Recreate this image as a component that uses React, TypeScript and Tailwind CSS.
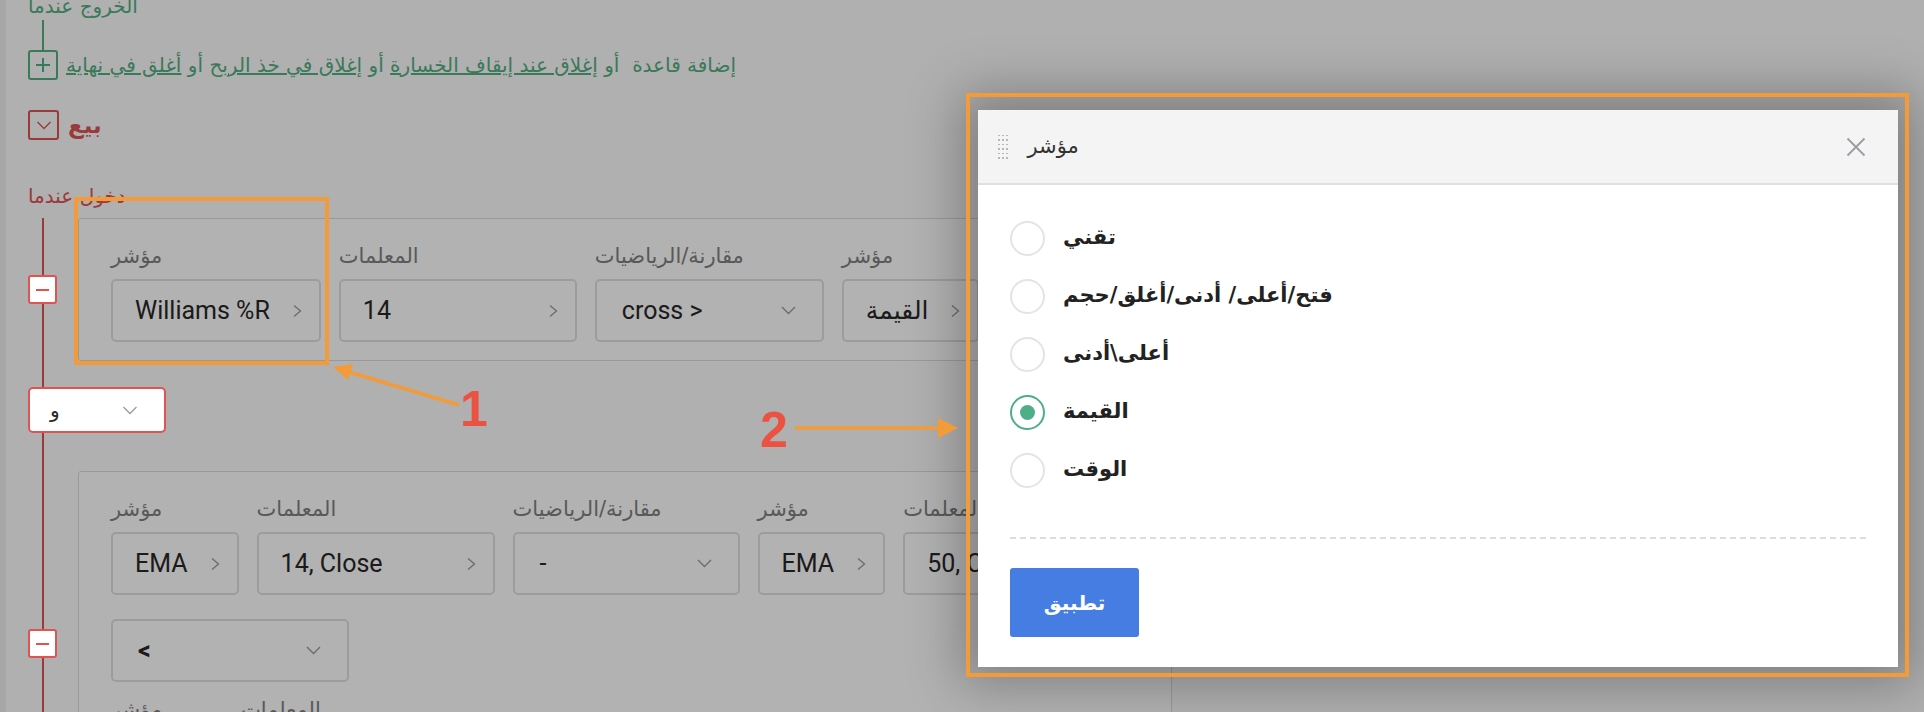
import clsx from "clsx";

const GREEN = "text-[#54ae82]";

function ChevronRight() {
  return (
    <svg width="11" height="14" viewBox="0 0 11 14" className="shrink-0">
      <path d="M2 1.5 L8.5 7 L2 12.5" fill="none" stroke="#9a9a9a" strokeWidth="1.3" />
    </svg>
  );
}

function ChevronDown({ color = "#9a9a9a", w = 15 }: { color?: string; w?: number }) {
  return (
    <svg width={w} height="9" viewBox="0 0 15 9" className="shrink-0">
      <path d="M1 1 L7.5 7.5 L14 1" fill="none" stroke={color} strokeWidth="1.3" />
    </svg>
  );
}

function Label({ text }: { text?: string }) {
  return <div className="h-[24px] whitespace-nowrap text-[21px] leading-[24px] text-[#808080]">{text}</div>;
}

function Field({ label, value, wide }: { label?: string; value: string; wide?: boolean }) {
  return (
    <div className="flex shrink-0 flex-col">
      <Label text={label} />
      <div
        className={clsx(
          "mt-[11px] flex h-[63px] items-center rounded-[5px] border-2 border-[#e0e0e0] bg-white pl-[22px] pr-[16px]",
          wide ? "w-[238px] justify-between" : "gap-[22px]"
        )}
      >
        <span className="whitespace-nowrap font-['Roboto','DejaVu_Sans',sans-serif] text-[25px] text-[#282828]">
          {value}
        </span>
        <ChevronRight />
      </div>
    </div>
  );
}

function Select({ label, value, width, bold }: { label?: string; value: string; width: string; bold?: boolean }) {
  const box = (
    <div
      className={clsx(
        "flex h-[63px] shrink-0 items-center justify-between rounded-[5px] border-2 border-[#e0e0e0] bg-white pl-[25px] pr-[26px]",
        width
      )}
    >
      <span
        className={clsx(
          "whitespace-nowrap font-['Roboto',sans-serif] text-[25px] text-[#282828]",
          bold && "font-bold"
        )}
      >
        {value}
      </span>
      <ChevronDown />
    </div>
  );
  if (label === undefined) return box;
  return (
    <div className="flex shrink-0 flex-col">
      <Label text={label} />
      <div className="mt-[11px]">{box}</div>
    </div>
  );
}

function MinusBox() {
  return (
    <div className="relative z-10 flex h-[29px] w-[29px] items-center justify-center rounded-[3px] border-2 border-[#df5353] bg-white">
      <div className="h-[2px] w-[13px] bg-[#df5353]" />
    </div>
  );
}

const options = ["تقني", "فتح/أعلى/ أدنى/أغلق/حجم", "أعلى\\أدنى", "القيمة", "الوقت"];

export default function App() {
  return (
    <div className="relative h-[712px] w-[1924px] overflow-hidden bg-[#fcfcfc] font-['DejaVu_Sans',sans-serif]">
      <div className="flex h-full">
        <div className="h-full w-[6px] bg-[#efefef]" />
        <div className="flex-1 pl-[22px]">
          {/* exit section */}
          <div className={clsx("-mt-[5px] h-[22px] text-left text-[20px] leading-[22px]", GREEN)}>الخروج عندما</div>
          <div className="ml-[14px] mt-[3px] h-[30px] w-[2px] bg-[#54ae82]" />
          <div className="flex h-[30px] items-center">
            <div className="flex h-[30px] w-[30px] shrink-0 items-center justify-center rounded-[3px] border-2 border-[#54ae82]">
              <svg width="14" height="14" viewBox="0 0 14 14">
                <path d="M7 0 V14 M0 7 H14" stroke="#54ae82" strokeWidth="2" />
              </svg>
            </div>
            <div dir="rtl" className={clsx("ml-[8px] whitespace-nowrap text-[20px] leading-[26px]", GREEN)}>
              <span>إضافة قاعدة</span>&nbsp; <span>أو</span> <span className="underline">إغلاق عند إيقاف الخسارة</span>{" "}
              <span>أو</span> <span className="underline">إغلاق في خذ الربح</span> <span>أو</span>{" "}
              <span className="underline">أغلق في نهاية</span>
            </div>
          </div>

          {/* sell */}
          <div className="mt-[30px] flex h-[30px] items-center">
            <div className="flex h-[30px] w-[31px] items-center justify-center rounded-[3px] border-2 border-[#df5353]">
              <ChevronDown color="#df5353" w={16} />
            </div>
            <div className="ml-[9px] text-[23px] font-bold text-[#df5353]">بيع</div>
          </div>

          <div className="mt-[45px] h-[22px] text-[20px] leading-[22px] text-[#df5353]">دخول عندما</div>

          {/* entry tree */}
          <div className="relative mt-[11px]">
            <div className="absolute bottom-0 left-[14px] top-0 w-[2px] bg-[#df5353]" />

            <div className="flex items-center">
              <div className="w-[50px] shrink-0">
                <MinusBox />
              </div>
              <div className="w-[1094px] shrink-0 rounded-[3px] border border-[#dbdbdb] bg-white px-[32px] pb-[18px] pt-[25px]">
                <div className="flex gap-[18px]">
                  <Field label="مؤشر" value="Williams %R" />
                  <Field label="المعلمات" value="14" wide />
                  <Select label="مقارنة/الرياضيات" value="cross >" width="w-[229px]" />
                  <Field label="مؤشر" value="القيمة" />
                  <Select label="القيمة" value="-20" width="w-[140px]" />
                </div>
              </div>
            </div>

            <div className="relative z-10 mt-[26px] flex h-[46px] w-[138px] items-center justify-between rounded-[5px] border-2 border-[#df5353] bg-white pl-[20px] pr-[26px]">
              <span className="text-[20px] text-[#282828]">و</span>
              <ChevronDown color="#9a9a9a" w={16} />
            </div>

            <div className="mt-[38px] flex items-center">
              <div className="w-[50px] shrink-0">
                <MinusBox />
              </div>
              <div className="w-[1094px] shrink-0 rounded-[3px] border border-[#dbdbdb] bg-white px-[32px] pb-[19px] pt-[25px]">
                <div className="flex gap-[18px]">
                  <Field label="مؤشر" value="EMA" />
                  <Field label="المعلمات" value="14, Close" wide />
                  <Select label="مقارنة/الرياضيات" value="-" width="w-[227px]" />
                  <Field label="مؤشر" value="EMA" />
                  <Field label="المعلمات" value="50, Close" wide />
                </div>
                <div className="mt-[24px] flex">
                  <Select value="<" width="w-[238px]" bold />
                </div>
                <div className="mt-[16px] flex gap-[18px]">
                  <Field label="مؤشر" value="RSI" />
                  <Field label="المعلمات" value="14, Close" wide />
                </div>
              </div>
            </div>
          </div>
        </div>
      </div>

      {/* dim overlay */}
      <div className="absolute inset-0 bg-black/30" />

      {/* modal */}
      <div className="absolute left-[978px] top-[110px] flex h-[557px] w-[920px] flex-col bg-white shadow-[0_0_50px_18px_rgba(0,0,0,0.28)]">
        <div className="flex h-[75px] items-center border-b-2 border-[#e0e0e0] bg-[#f4f4f4] pl-[20px] pr-[32px]">
          <div className="grid grid-cols-3 gap-x-[2.5px] gap-y-[3px]">
            {Array.from({ length: 18 }).map((_, i) => (
              <div key={i} className="h-[1.5px] w-[1.5px] bg-[#b8b8b8]" />
            ))}
          </div>
          <div className="ml-[20px] text-[21px] text-[#333]">مؤشر</div>
          <svg width="20" height="20" viewBox="0 0 20 20" className="ml-auto">
            <path d="M1.5 1.5 L18.5 18.5 M18.5 1.5 L1.5 18.5" stroke="#9aa0a6" strokeWidth="2" />
          </svg>
        </div>
        <div className="flex flex-col px-[32px] pt-[24px]">
          {options.map((o, i) => {
            const on = i === 3;
            return (
              <div key={o} className="flex h-[58px] items-center">
                <div
                  className={clsx(
                    "flex h-[35px] w-[35px] items-center justify-center rounded-full border-2",
                    on ? "border-[#4caf88]" : "border-[#e4e4e4]"
                  )}
                >
                  {on && <div className="h-[15px] w-[15px] rounded-full bg-[#4caf88]" />}
                </div>
                <div className="ml-[18px] text-[21px] font-bold text-[#222]">{o}</div>
              </div>
            );
          })}
          <div className="mt-[38px] border-t-2 border-dashed border-[#dcdcdc]" />
          <button className="mt-[29px] h-[69px] w-[129px] rounded-[3px] bg-[#467de3] text-[20px] font-bold text-white">
            تطبيق
          </button>
        </div>
      </div>

      {/* annotations */}
      <div className="absolute left-[74px] top-[197px] h-[168px] w-[255px] border-4 border-[#f29b38]" />
      <div className="absolute left-[966px] top-[93px] h-[584px] w-[943px] border-4 border-[#f29b38]" />
      <svg className="pointer-events-none absolute inset-0" width="1924" height="712">
        <line x1="459" y1="405" x2="346" y2="371" stroke="#f29b38" strokeWidth="3.5" />
        <polygon points="333,367 348,380 353,364" fill="#f29b38" />
        <line x1="795" y1="428" x2="942" y2="428" stroke="#f29b38" strokeWidth="3.5" />
        <polygon points="958,428 938,418 938,438" fill="#f29b38" />
      </svg>
      <div className="absolute left-[460px] top-[384px] font-['Liberation_Sans',sans-serif] text-[50px] font-bold leading-none text-[#eb5242]">
        1
      </div>
      <div className="absolute left-[760px] top-[405px] font-['Liberation_Sans',sans-serif] text-[50px] font-bold leading-none text-[#eb5242]">
        2
      </div>
    </div>
  );
}
